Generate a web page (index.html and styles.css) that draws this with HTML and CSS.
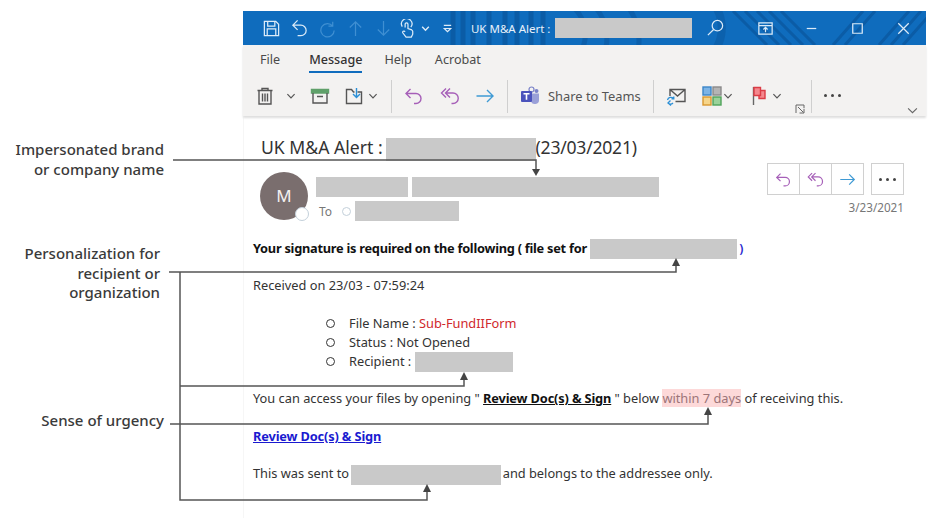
FILE: index.html
```html
<!DOCTYPE html>
<html lang="en">
<head>
    <meta charset="UTF-8">
    <meta name="viewport" content="width=device-width, initial-scale=1.0">
    <title>UK M&amp;A Alert phishing example</title>
    <link rel="stylesheet" href="styles.css">
</head>
<body>
    <div class="page">
        <aside class="labels">
            <div class="label label-brand">Impersonated brand<br>or company name</div>
            <div class="label label-personal">Personalization for<br>recipient or<br>organization</div>
            <div class="label label-urgency">Sense of urgency</div>
        </aside>

        <main class="window">
            <header class="titlebar">
                <svg class="titlebar-pattern" width="683" height="34" viewBox="0 0 683 34">
                    <g fill="none" stroke="#0b5ca6" stroke-width="5">
                        <path d="M210 0v34M220 0v34M230 0v34M246 0v34M262 0v34M274 0v34M288 0v34M300 0v34"/>
                        <path d="M330 -4a36 36 0 0 1 10 40M350 -6a46 46 0 0 1 12 46M380 -10a56 56 0 0 1 14 54" opacity=".8"/>
                        <path d="M490 0l34 34M502 0l34 34M514 0l34 34M526 0l34 34M538 0l34 34" stroke-width="3"/>
                        <path d="M590 34l30 -34M602 34l30 -34M660 34l30 -34M648 34l30 -34M636 34l30 -34" stroke-width="3"/>
                        <path d="M470 -8a40 40 0 0 1 0 50" stroke-width="8" opacity=".7"/>
                    </g>
                </svg>
                <span class="qat">
                    <svg viewBox="0 0 20 20"><path d="M2.500 2.500h12l3 3v12h-15zM6 2.500v5h7.500v-5M5.500 17.500v-7h9v7"/></svg>
                </span>
                <span class="qat">
                    <svg viewBox="0 0 20 20"><path d="M8 1.500L3 6.500l5 5M3 6.500h8.500a5.500 5.500 0 0 1 0 11H8"/></svg>
                </span>
                <span class="qat qat-dim">
                    <svg viewBox="0 0 20 20"><path d="M15.500 3v4.500H11M15.500 7.500A7 7 0 1 0 17 12"/></svg>
                </span>
                <span class="qat qat-dim">
                    <svg viewBox="0 0 20 20"><path d="M10 18V3M4 9l6-6 6 6"/></svg>
                </span>
                <span class="qat qat-dim">
                    <svg viewBox="0 0 20 20"><path d="M10 2v15M4 11l6 6 6-6"/></svg>
                </span>
                <span class="qat qat-touch">
                    <svg viewBox="0 0 20 20"><path d="M4.500 8a5.500 5.500 0 1 1 9 .5M7.500 9V5.500a1.500 1.500 0 0 1 3 0V10l4 1.500a2 2 0 0 1 1 2V16l-1.500 3H8.500L5 14.500a1.300 1.300 0 0 1 2-1.500l.5.500"/></svg>
                </span>
                <span class="qat-chevron">
                    <svg viewBox="0 0 10 10"><path d="M2 3.500l3 3 3-3"/></svg>
                </span>
                <span class="qat-more">
                    <svg viewBox="0 0 12 12"><path d="M2 2.500h8M2.500 6h7L6 9.500z"/></svg>
                </span>
                <span class="title-text">UK M&amp;A Alert :</span>
                <span class="redact redact-title"></span>
                <span class="win-btn">
                    <svg viewBox="0 0 20 20"><circle cx="12" cy="7" r="5.500"/><path d="M8 11l-6 6"/></svg>
                </span>
                <span class="win-btn win-display">
                    <svg viewBox="0 0 20 20"><path d="M3 4h14v12H3zM3 7h14M10 14V9M7.800 11L10 8.800l2.200 2.200"/></svg>
                </span>
                <span class="win-btn">
                    <svg viewBox="0 0 20 20"><path d="M5 10h10"/></svg>
                </span>
                <span class="win-btn">
                    <svg viewBox="0 0 20 20"><path d="M5 5h10v10H5z"/></svg>
                </span>
                <span class="win-btn">
                    <svg viewBox="0 0 20 20"><path d="M4.500 4.500l11 11M15.500 4.500l-11 11"/></svg>
                </span>
            </header>

            <section class="ribbon">
                <nav class="tabs">
                    <span class="tab">File</span>
                    <span class="tab tab-active">Message</span>
                    <span class="tab">Help</span>
                    <span class="tab">Acrobat</span>
                </nav>
                <div class="toolbar">
                    <div class="group group-first">
                        <span class="tool">
                            <svg viewBox="0 0 20 20"><path d="M2.500 4.500h15M7 4.500V2.500h6v2M4 4.500V18h12V4.500M7.500 7.500v8M10 7.500v8M12.500 7.500v8" stroke="#555"/></svg>
                        </span>
                        <span class="chevron chevron-trash"><svg viewBox="0 0 10 10"><path d="M2 3.500l3 3 3-3"/></svg></span>
                        <span class="tool">
                            <svg viewBox="0 0 20 20"><path d="M1.500 3.500h17v3.500h-17z" fill="#5fa06a" stroke="#5fa06a"/><path d="M3 7v10h14V7M7 10.500h6" stroke="#555"/></svg>
                        </span>
                        <span class="tool tool-move">
                            <svg viewBox="0 0 20 20"><path d="M1.500 6V17.500h15V6h-4M1.500 6V3.500h5l2 2.500h1" stroke="#555"/><path d="M11.500 2v9M8 8l3.500 3.500L15 8" stroke="#2b8fd6"/></svg>
                        </span>
                        <span class="chevron"><svg viewBox="0 0 10 10"><path d="M2 3.500l3 3 3-3"/></svg></span>
                    </div>
                    <div class="group group-reply">
                        <span class="tool">
                            <svg viewBox="0 0 20 20"><path d="M6.500 3L2 7.500 6.500 12M2 7.500h10a5 5 0 0 1 5 5 5 5 0 0 1-5 5H10" stroke="#a65fb8"/></svg>
                        </span>
                        <span class="tool">
                            <svg viewBox="0 0 20 20"><path d="M6 2.500L1.500 7 6 11.500M10 2.500L5.500 7l4.500 4.500M5.500 7H13a5 5 0 0 1 0 10.500h-1.500" stroke="#a65fb8"/></svg>
                        </span>
                        <span class="tool">
                            <svg viewBox="0 0 20 20"><path d="M1.500 10h16.500M12 4l6 6-6 6" stroke="#3f9ad4"/></svg>
                        </span>
                    </div>
                    <div class="group group-teams">
                        <span class="tool">
                            <svg viewBox="0 0 20 20">
                                <circle cx="11.500" cy="3.500" r="2.500" fill="none" stroke="#7b83c9" stroke-width="1.200"/>
                                <circle cx="16.500" cy="5" r="2" fill="#7b83c9" stroke="none"/>
                                <path d="M9 7.500h10v6a4 4 0 0 1-8 1z" fill="#9aa0d8" stroke="none"/>
                                <rect x="1" y="5" width="11" height="11" rx="1" fill="#4b53bc" stroke="none"/>
                                <path d="M3.500 7.800h6M6.500 7.800v6" stroke="#fff" stroke-width="1.600"/>
                            </svg>
                        </span>
                        <span class="tool-text">Share to Teams</span>
                    </div>
                    <div class="group group-tags">
                        <span class="tool">
                            <svg viewBox="0 0 20 20"><path d="M4 10V3.500h15v12H9.500M4 3.500l7.500 6.500 7.500-6.500" stroke="#555"/><path d="M1.500 14a3.500 3.500 0 0 1 6-1.500M7.800 10.500v2.300H5.500M7 17a3.500 3.500 0 0 1-5 0M5 19.500L2 17l2.500-2.500" stroke="#2b8fd6" stroke-width="1.300"/></svg>
                        </span>
                        <span class="tool tool-categories">
                            <svg viewBox="0 0 20 20">
                                <rect x="1" y="1" width="8" height="8" fill="#7db4e6" stroke="#3b86c8"/>
                                <rect x="11" y="1" width="8" height="8" fill="#b4b4b4" stroke="#8a8a8a"/>
                                <rect x="1" y="11" width="8" height="8" fill="#f6d58a" stroke="#d9982f"/>
                                <rect x="11" y="11" width="8" height="8" fill="#9ad29a" stroke="#4fa35a"/>
                            </svg>
                        </span>
                        <span class="chevron"><svg viewBox="0 0 10 10"><path d="M2 3.500l3 3 3-3"/></svg></span>
                        <span class="tool tool-flag">
                            <svg viewBox="0 0 20 20"><path d="M2.500 1v18" stroke="#666"/><path d="M3 1.500h6.500v3H14v8H8v-3H3z" fill="#f4888e" stroke="#dc3c46"/><path d="M9.500 4.500v5H8" stroke="#dc3c46"/></svg>
                        </span>
                        <span class="chevron"><svg viewBox="0 0 10 10"><path d="M2 3.500l3 3 3-3"/></svg></span>
                    </div>
                    <div class="group group-last">
                        <span class="tool-dots"><i></i><i></i><i></i></span>
                    </div>
                    <svg class="launcher" viewBox="0 0 10 10"><path d="M1 9V1h8v3M3 3l5.500 5.500M4.500 9h4.500V4.800"/></svg>
                    <svg class="collapse" viewBox="0 0 10 10"><path d="M1 3l4 4 4-4"/></svg>
                </div>
            </section>

            <section class="reading">
                <h1 class="subject">UK M&amp;A Alert :<span class="redact redact-subject"></span><span class="subject-date">(23/03/2021)</span></h1>

                <div class="msg-header">
                    <div class="avatar">M<span class="presence"></span></div>
                    <div class="sender">
                        <div class="sender-row">
                            <span class="redact redact-from"></span>
                            <span class="redact redact-address"></span>
                        </div>
                        <div class="sender-row to-row">
                            <span class="to">To</span>
                            <span class="to-dot"></span>
                            <span class="redact redact-to"></span>
                        </div>
                    </div>
                    <div class="actions">
                        <div class="action-row">
                            <div class="action-set">
                                <span class="action">
                                    <svg viewBox="0 0 20 20"><path d="M6.500 3L2 7.500 6.500 12M2 7.500h10a5 5 0 0 1 5 5 5 5 0 0 1-5 5H10" stroke="#a65fb8"/></svg>
                                </span>
                                <span class="action">
                                    <svg viewBox="0 0 20 20"><path d="M6 2.500L1.500 7 6 11.500M10 2.500L5.500 7l4.500 4.500M5.500 7H13a5 5 0 0 1 0 10.500h-1.500" stroke="#a65fb8"/></svg>
                                </span>
                                <span class="action">
                                    <svg viewBox="0 0 20 20"><path d="M1.500 10h16.500M12 4l6 6-6 6" stroke="#3f9ad4"/></svg>
                                </span>
                            </div>
                            <span class="action action-more"><span class="tool-dots"><i></i><i></i><i></i></span></span>
                        </div>
                        <div class="msg-date">3/23/2021</div>
                    </div>
                </div>

                <div class="msg-body">
                    <p><strong class="signature">Your signature is required on the following ( file set for</strong> <span class="redact redact-org"></span><span class="paren">)</span></p>
                    <p>Received on 23/03 - 07:59:24</p>
                    <ul class="details">
                        <li>File Name : <span class="file-name">Sub-FundIIForm</span></li>
                        <li>Status : Not Opened</li>
                        <li>Recipient : <span class="redact redact-recipient"></span></li>
                    </ul>
                    <p>You can access your files by opening " <strong class="review">Review Doc(s) &amp; Sign</strong> " below <span class="urgent">within 7 days</span> of receiving this.</p>
                    <p><a class="review-link" href="#">Review Doc(s) &amp; Sign</a></p>
                    <p>This was sent to <span class="redact redact-sent"></span> and belongs to the addressee only.</p>
                </div>
            </section>
        </main>
    </div>

    <!-- callout lines drawn over the email -->
    <svg class="callouts" width="936" height="518" viewBox="0 0 936 518">
        <g fill="none" stroke="#555" stroke-width="1.500">
            <path d="M173 160H536V170"/>
            <path d="M169 272H676V264"/>
            <path d="M180 272V500H427V491"/>
            <path d="M180 386H464V379"/>
            <path d="M170 424H708V414"/>
        </g>
        <g fill="#444">
            <path d="M532 169h8l-4 7z"/>
            <path d="M672 266h8l-4-8z"/>
            <path d="M423 492h8l-4-8z"/>
            <path d="M460 380h8l-4-8z"/>
            <path d="M704 415h8l-4-8z"/>
        </g>
    </svg>
</body>
</html>
```

FILE: styles.css
```css
* { box-sizing: border-box; }

body {
    margin: 0;
    background: #fff;
    font-family: "Noto Sans", "Open Sans", sans-serif;
    color: #333;
}

.page {
    display: flex;
    width: 936px;
    height: 518px;
    overflow: hidden;
}

.callouts {
    position: absolute;
    left: 0;
    top: 0;
}

/* left column */
.labels {
    width: 243px;
    flex: none;
}
.label {
    font-size: 15px;
    font-weight: 500;
    line-height: 19.500px;
    text-align: right;
    color: #3a3a3a;
}
.label-brand { width: 164px; margin-top: 140px; }
.label-personal { width: 160px; margin-top: 65px; }
.label-urgency { width: 164px; margin-top: 108px; }

/* window */
.window {
    width: 683px;
    margin-top: 11px;
    flex: none;
    border-left: 1px solid #f6f6f6;
}
.titlebar {
    position: relative;
    display: flex;
    align-items: center;
    height: 34px;
    margin-left: -1px;
    padding-left: 14px;
    background: #0f6cbd;
    color: #e8f1fa;
    overflow: hidden;
}
.titlebar-pattern {
    position: absolute;
    left: 0;
    top: 0;
}
.titlebar svg:not(.titlebar-pattern) {
    position: relative;
    fill: none;
    stroke: #dcebf8;
    stroke-width: 1.300;
}
.qat {
    display: flex;
    justify-content: center;
    width: 28px;
    flex: none;
}
.qat svg { width: 19px; height: 19px; }
.qat-dim svg { stroke: #3f8fd2 !important; }
.qat-touch { width: 24px; margin-left: -2px; }
.qat-chevron { display: flex; width: 12px; margin-left: 1px; }
.qat-chevron svg { width: 11px; height: 11px; }
.qat-more { display: flex; width: 12px; margin-left: 10px; }
.qat-more svg { width: 11px; height: 11px; }
.title-text {
    position: relative;
    margin-left: 17px;
    font-size: 11.500px;
    white-space: nowrap;
}
.win-btn {
    display: flex;
    justify-content: center;
    width: 46px;
    flex: none;
}
.win-btn svg { width: 19px; height: 19px; }
.win-display { margin-left: 4px; }

.redact {
    display: inline-block;
    position: relative;
    height: 20px;
    margin: -3px 0;
    vertical-align: middle;
    background: #c9c9c9;
}
.redact-title { width: 137px; margin-left: 5px; }
.redact-subject { width: 150px; height: 23px; margin-left: 3px; }
.redact-from { width: 92px; }
.redact-address { width: 247px; margin-left: 4px; }
.redact-to { width: 104px; }
.redact-org { width: 147px; }
.redact-recipient { width: 98px; }
.redact-sent { width: 150px; margin-left: -1px; margin-right: -2px; }

/* ribbon */
.ribbon {
    height: 71px;
    margin-left: -1px;
    background: #f3f2f1;
    box-shadow: 0 2px 2px #dedede;
}
.tabs {
    display: flex;
    height: 30px;
    padding: 5px 0 0 17px;
    font-size: 12.600px;
    color: #4a4a4a;
}
.tab {
    height: 23px;
    line-height: 20px;
    margin-right: 23px;
}
.tab:first-child { margin-right: 29px; }
.tab-active {
    margin-right: 22px;
    font-weight: 500;
    color: #333;
    border-bottom: 2px solid #0f6cbd;
}

.toolbar {
    position: relative;
    display: flex;
    height: 33px;
    margin-top: 5px;
    padding-left: 12px;
}
.group {
    display: flex;
    align-items: center;
    gap: 15px;
    padding: 0 12px 2px;
    border-right: 1px solid #cfcfcf;
}
.group-first { gap: 0; padding-left: 0; padding-right: 12px; }
.group-reply { gap: 15.500px; }
.group-teams { gap: 8px; }
.group-tags { gap: 0; padding-right: 28px; }
.group-tags .chevron { margin-left: 0; }
.group-last { border-right: 0; padding-left: 12px; }
.tool { display: flex; width: 20px; flex: none; }
.tool svg { width: 20px; height: 20px; fill: none; stroke-width: 1.400; }
.tool-text { font-size: 12.900px; color: #555; white-space: nowrap; }
.chevron { display: flex; width: 12px; margin-left: 2px; flex: none; }
.chevron svg { width: 12px; height: 12px; fill: none; stroke: #555; stroke-width: 1; }
.chevron-trash { margin: 0 13px 0 10px; }
.tool-move { margin-left: 15px; }
.tool-categories { margin-left: 16px; }
.tool-flag { margin-left: 17px; }
.tool-dots { display: flex; gap: 4px; width: 20px; }
.tool-dots i {
    width: 3px;
    height: 3px;
    border-radius: 50%;
    background: #444;
}
.launcher, .collapse {
    position: absolute;
    fill: none;
    stroke: #666;
    stroke-width: 1;
}
.launcher { left: 552px; top: 24px; width: 10px; height: 10px; }
.collapse { left: 664px; top: 25px; width: 11px; height: 11px; }

/* reading pane */
.reading { padding-top: 18px; }
.subject {
    height: 24px;
    margin: 0;
    padding-left: 17px;
    font-size: 17.600px;
    font-weight: 400;
    line-height: 26px;
    color: #333;
    white-space: nowrap;
}
.subject-date { letter-spacing: -.25px; }
.msg-header {
    display: flex;
    height: 68px;
    margin-top: 5px;
    padding: 0 22px 0 16px;
}
.avatar {
    position: relative;
    width: 48px;
    height: 48px;
    margin-top: 9px;
    flex: none;
    border-radius: 50%;
    background: #7a6e6e;
    color: #f3f0f0;
    font-size: 17px;
    line-height: 48px;
    text-align: center;
}
.presence {
    position: absolute;
    right: -1px;
    bottom: -1px;
    width: 14px;
    height: 14px;
    border: 1.500px solid #c3d0da;
    border-radius: 50%;
    background: #fff;
}
.sender { margin: 14px 0 0 8px; }
.sender-row { display: flex; height: 20px; }
.to-row { align-items: center; margin-top: 4px; }
.to { width: 22px; margin-left: 3px; font-size: 12px; color: #777; }
.to-dot {
    width: 9px;
    height: 9px;
    margin: 0 4px 0 1px;
    border: 1px solid #c3d0da;
    border-radius: 50%;
}
.sender-row .redact { margin: 0; }
.sender-row .redact-address { margin-left: 4px; }
.actions {
    margin-left: auto;
    display: flex;
    flex-direction: column;
    align-items: flex-end;
}
.action-row { display: flex; gap: 8px; }
.action-set { display: flex; }
.action {
    display: flex;
    align-items: center;
    justify-content: center;
    width: 33px;
    height: 32px;
    border: 1px solid #d0d0d0;
    margin-left: -1px;
}
.action svg { width: 17px; height: 17px; fill: none; stroke-width: 1.400; }
.action-more .tool-dots { justify-content: center; }
.msg-date { margin-top: 4px; font-size: 11.700px; line-height: 16px; color: #777; }

.msg-body {
    padding: 7.500px 0 0 9px;
    font-size: 12.800px;
    line-height: 19px;
    color: #333;
}
.msg-body p { margin: 0 0 18.500px; white-space: nowrap; }
.msg-body strong { color: #111; font-weight: 700; letter-spacing: -.15px; }
.msg-body .signature { letter-spacing: -.26px; }
.paren { margin-left: 2px; color: #2a2ad0; font-weight: 600; }
.details {
    margin: 0 0 18.500px;
    padding-left: 73px;
    list-style: none;
}
.details li::before {
    content: "";
    display: inline-block;
    width: 7px;
    height: 7px;
    margin-right: 14px;
    border: 1.300px solid #333;
    border-radius: 50%;
}
.file-name { color: #d0282c; }
.review { text-decoration: underline; }
.urgent { background: #fdd9d9; color: #9c7478; }
.review-link { color: #1a1ad0; font-weight: 700; letter-spacing: -.15px; }
```
